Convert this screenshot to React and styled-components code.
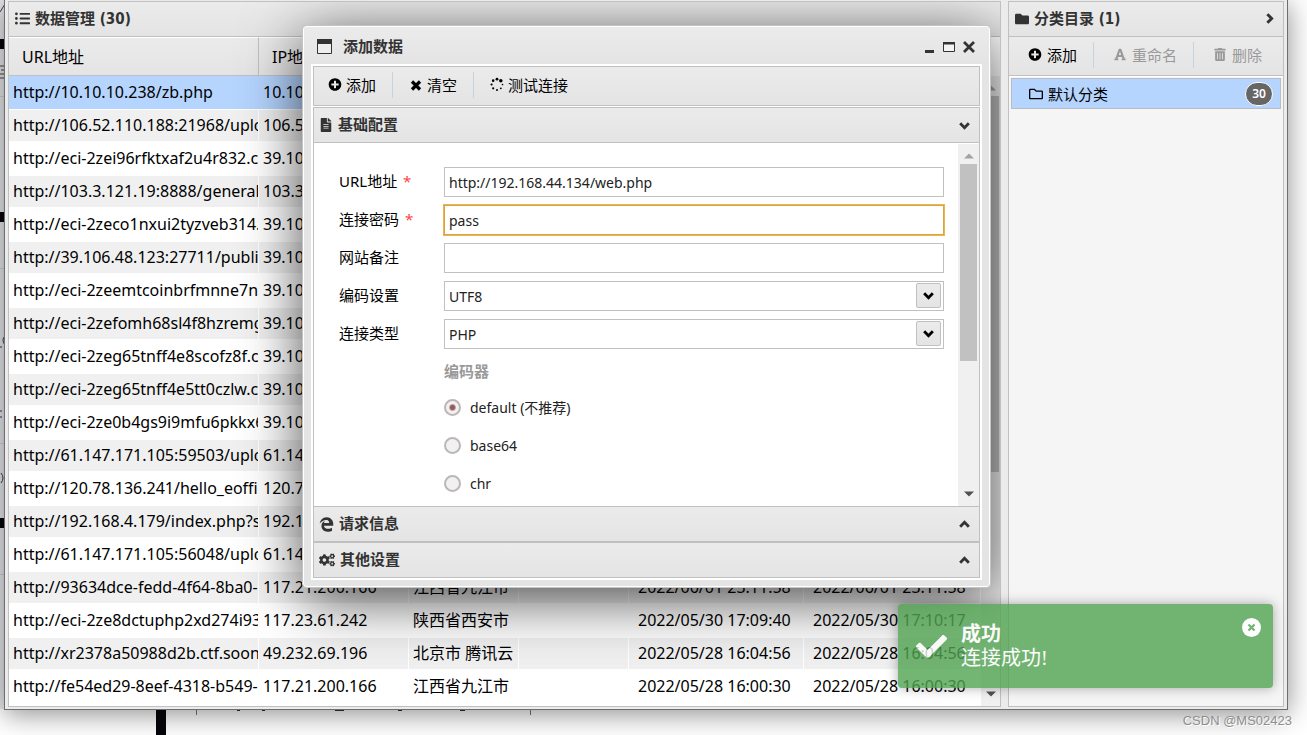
import React, { useState } from 'react';
import styled, { createGlobalStyle, css } from 'styled-components';
import {
  FaCheck,
  FaCogs,
  FaEdgeLegacy,
  FaFileAlt,
  FaFolder,
  FaFont,
  FaListUl,
  FaPlusCircle,
  FaRegFolder,
  FaTrashAlt
} from 'react-icons/fa';

const GlobalStyle = createGlobalStyle`
  * {
    box-sizing: border-box;
  }

  body {
    margin: 0;
    overflow: hidden;
    background: #fff;
    color: #000;
    font-family: 'Noto Sans', 'Noto Sans CJK SC', sans-serif;
    font-size: 15px;
  }

  button, input, select {
    font: inherit;
    color: inherit;
  }
`;

const barFill = css`
  background: linear-gradient(#ebebeb, #e4e4e4);
`;

const Desktop = styled.div`
  position: relative;
  height: 100vh;
  padding: 0 19px 0 4px;
  overflow: hidden;
`;

const Backdrop = styled.svg`
  position: absolute;
  left: 0;
  top: 0;
  width: 100%;
  height: 100%;
`;

const AppWindow = styled.main`
  position: relative;
  display: flex;
  gap: 7px;
  height: calc(100vh - 25px);
  padding: 1px 3px 2px;
  border: 1px solid #6e6e6e;
  border-top: 0;
  background: #ebebeb;
  box-shadow: 0 4px 26px rgba(0, 0, 0, 0.45);
`;

const Panel = styled.section`
  position: relative;
  display: flex;
  flex-direction: column;
  min-width: 0;
  flex: ${({ $width }) => ($width ? `0 0 ${$width}` : '1')};
  border: 1px solid #c0c0c0;
  background: ${({ $bg }) => $bg || '#fff'};
  overflow: hidden;
`;

const PanelHeader = styled.header`
  ${barFill}
  display: flex;
  align-items: center;
  gap: 5px;
  height: 35px;
  flex: none;
  padding: 0 7px 1px 6px;
  border-bottom: 1px solid #c0c0c0;
  color: #333;
`;

const PanelTitle = styled.h2`
  flex: 1;
  margin: 0;
  font-family: 'DejaVu Sans Condensed', 'Noto Sans', 'Noto Sans CJK SC', sans-serif;
  font-size: 15px;
  line-height: 20px;
`;

const PlainButton = styled.button`
  display: flex;
  align-items: center;
  justify-content: center;
  padding: 0;
  border: 0;
  background: none;
`;

const GridArea = styled.div`
  display: flex;
  flex: 1;
  min-height: 0;
`;

const GridClip = styled.div`
  flex: 1;
  min-width: 0;
  overflow: hidden;
`;

const Grid = styled.table`
  width: 100%;
  table-layout: fixed;
  border-collapse: separate;
  border-spacing: 0;
  font-size: 16px;
`;

const HeadCell = styled.th`
  ${barFill}
  height: 39px;
  padding: 0 13px 2px;
  border-top: 1px solid #fff;
  border-right: 1px solid #c0c0c0;
  border-bottom: 1px solid #c0c0c0;
  font-weight: 400;
  text-align: left;
  white-space: nowrap;
`;

const Row = styled.tr`
  background: ${({ $selected, $alt }) => ($selected ? '#b5d4fe' : $alt ? '#f0f0f0' : '#fff')};
`;

const Cell = styled.td`
  padding: 0 0 0 ${({ $wide }) => ($wide ? '9px' : '4px')};
  border: solid ${({ $selected }) => ($selected ? '#b5d4fe' : '#fff')};
  border-width: 1px 1px 1px 0;
  line-height: 31px;
  white-space: nowrap;
  overflow: hidden;
`;

const ScrollTrack = styled.div`
  display: flex;
  flex-direction: column;
  align-items: center;
  justify-content: space-between;
  flex: 0 0 ${({ $wide }) => ($wide ? '21px' : '19px')};
  margin-top: ${({ $offset }) => $offset || 0};
  padding: 9px 0;
  background: #f0f0f0;
`;

const ScrollThumb = styled.div`
  flex: 0 0 ${({ $size }) => $size};
  width: 17px;
  margin: 5px 0 auto;
  background: #c1c1c1;
`;

const Toolbar = styled.div`
  ${barFill}
  display: flex;
  align-items: center;
  height: 39px;
  flex: none;
  padding-bottom: 3px;
  border-bottom: 1px solid #c0c0c0;
`;

const ToolButton = styled.button`
  display: flex;
  align-items: center;
  gap: ${({ $roomy }) => ($roomy ? '5px' : '4px')};
  height: 26px;
  padding: 0 16px 0 ${({ $roomy }) => ($roomy ? '19px' : '16px')};
  border: 0;
  border-right: 1px solid #c3d5da;
  background: none;
  line-height: 20px;
  white-space: nowrap;

  &:last-child {
    border-right: 0;
  }

  &:disabled {
    color: #999;
  }

  svg {
    flex: 0 0 14px;
  }
`;

const CategoryList = styled.ul`
  margin: 0;
  padding: 1px 2px;
  border-top: 1px solid #fff;
  list-style: none;
`;

const Category = styled.li`
  display: flex;
  align-items: center;
  gap: 5px;
  height: 31px;
  padding: 0 7px 0 17px;
  border: 1px solid #b9bcc4;
  background: #b5d4fe;
`;

const CategoryName = styled.span`
  flex: 1;
  line-height: 20px;
`;

const Badge = styled.span`
  display: flex;
  align-items: center;
  justify-content: center;
  width: 28px;
  height: 24px;
  border: 1px solid #fff;
  border-radius: 12px;
  background: #666;
  color: #fff;
  font-size: 12px;
  font-weight: 600;
`;

const DialogLayer = styled.div`
  position: absolute;
  inset: 24px 10px auto 0;
  display: flex;
  justify-content: flex-end;
`;

const Dialog = styled.div`
  width: 687px;
  max-width: 100%;
  padding: 0 7px 6px;
  border: 1px solid #fff;
  border-radius: 3px;
  outline: 1px solid #c4c4c4;
  background: linear-gradient(#ebebeb, #e4e4e4 38px);
  box-shadow: 0 12px 60px rgba(0, 0, 0, 0.7);
`;

const DialogHeader = styled.header`
  display: flex;
  align-items: center;
  gap: 11px;
  height: 37px;
  padding: 2px 3px 0 6px;
  color: #333;
`;

const WindowButtons = styled.div`
  display: flex;

  button {
    width: 20px;
    height: 20px;
  }
`;

const DialogBody = styled.div`
  padding: 2px;
  background: #fff;
`;

const DialogToolbar = styled(Toolbar)`
  height: 40px;
  margin-bottom: 1px;
  border: 1px solid #c0c0c0;

  button:first-child {
    padding-left: 14px;
  }
`;

const SectionHeader = styled.h3`
  ${barFill}
  height: 36px;
  margin: 0;
  border: 1px solid #c0c0c0;
  font-size: 15px;
`;

const SectionToggle = styled.button`
  display: flex;
  align-items: center;
  gap: 5px;
  width: 100%;
  height: 34px;
  padding: 0 8px 0 5px;
  border: 0;
  background: none;
  color: #333;
  line-height: 20px;
  text-align: left;
`;

const SectionTitle = styled.span`
  flex: 1;
  padding-bottom: 2px;
`;

const SectionBody = styled.div`
  display: flex;
  height: 363px;
  padding-top: 1px;
  border: solid #c0c0c0;
  border-width: 0 1px;
  overflow: hidden;
`;

const Form = styled.form`
  display: flex;
  flex: 1;
  flex-direction: column;
  gap: 8px;
  min-width: 0;
  padding: 23px 14px 0 25px;
`;

const Field = styled.div`
  display: flex;
  align-items: center;
  flex: 0 0 30px;
`;

const FieldLabel = styled.label`
  flex: 0 0 105px;
  padding-bottom: 2px;
  line-height: 20px;
`;

const Required = styled.span`
  margin-left: 2px;
  color: #f44;
`;

const TextBox = styled.input`
  flex: 1;
  min-width: 0;
  height: 30px;
  padding: 0 4px;
  border: 1px solid ${({ $active }) => ($active ? '#d9a244' : '#c0c0c0')};
  border-radius: 0;
  outline: ${({ $active }) => ($active ? '1px solid #f0b54a' : 'none')};
  background: #fff;
  color: #222;
  font-size: 14px;
`;

const Combo = styled.div`
  position: relative;
  display: flex;
  flex: 1;
`;

const ComboSelect = styled.select`
  flex: 1;
  height: 30px;
  padding: 0 4px;
  border: 1px solid #c0c0c0;
  border-radius: 0;
  background: #fff;
  color: #222;
  font-size: 14px;
  appearance: none;
`;

const ComboArrow = styled.span`
  ${barFill}
  position: absolute;
  top: 2px;
  right: 3px;
  display: flex;
  align-items: center;
  justify-content: center;
  width: 25px;
  height: 25px;
  border: 1px solid #c0c0c0;
  border-radius: 2px;
  pointer-events: none;
`;

const Options = styled.fieldset`
  display: flex;
  flex-direction: column;
  gap: 8px;
  margin: 0 0 0 105px;
  padding: 0;
  border: 0;
`;

const OptionsTitle = styled.legend`
  height: 28px;
  margin-bottom: 7px;
  padding: 0;
  color: #999;
  font-weight: 700;
  line-height: 28px;
`;

const Option = styled.label`
  display: flex;
  align-items: center;
  gap: 9px;
  height: 30px;
  color: #222;
  font-size: 14px;
`;

const Radio = styled.input`
  width: 17px;
  height: 17px;
  margin: 0;
  border: 2px solid #bdb6b6;
  border-radius: 50%;
  background: #f1f1f1;
  appearance: none;

  &:checked {
    background: radial-gradient(circle, #96595a 2px, #f1f1f1 4px);
  }
`;

const Toast = styled.div`
  position: absolute;
  right: 34px;
  bottom: 47px;
  display: flex;
  align-items: flex-start;
  width: 375px;
  height: 84px;
  padding: 14px 12px 0 18px;
  border-radius: 4px;
  background: #51a351;
  color: #fff;
  box-shadow: 0 0 12px rgba(0, 0, 0, 0.4);
  opacity: 0.8;
`;

const ToastIcon = styled.span`
  padding-top: 13px;
`;

const ToastText = styled.div`
  flex: 1;
  margin-left: 14px;
  padding-top: 4px;
  font-family: 'Liberation Serif', 'Noto Sans CJK SC', serif;
  font-size: 20px;
  line-height: 24px;
`;

const ToastTitle = styled.strong`
  display: block;
`;

const Watermark = styled.span`
  position: absolute;
  right: 15px;
  bottom: 6px;
  color: #8d8d8d;
  font-family: 'Liberation Sans', sans-serif;
  font-size: 13px;
  line-height: 16px;
  text-shadow: 1px 1px 0 #fff;
`;

const columns = [
  { title: 'URL地址', key: 'url', width: 250 },
  { title: 'IP地址', key: 'ip', width: 150 },
  { title: '物理位置', key: 'place', width: 110 },
  { title: '网站备注', key: 'note', width: 110 },
  { title: '创建时间', key: 'created', width: 175, wide: true },
  { title: '更新时间', key: 'updated', wide: true }
];

const rows = [
  { url: 'http://10.10.10.238/zb.php', ip: '10.10.10.238' },
  { url: 'http://106.52.110.188:21968/uplo', ip: '106.52.110.188' },
  { url: 'http://eci-2zei96rfktxaf2u4r832.clo', ip: '39.106.48.123' },
  { url: 'http://103.3.121.19:8888/general/', ip: '103.3.121.19' },
  { url: 'http://eci-2zeco1nxui2tyzveb314.c', ip: '39.106.48.123' },
  { url: 'http://39.106.48.123:27711/public', ip: '39.106.48.123' },
  { url: 'http://eci-2zeemtcoinbrfmnne7nq.', ip: '39.106.48.123' },
  { url: 'http://eci-2zefomh68sl4f8hzremg.', ip: '39.106.48.123' },
  { url: 'http://eci-2zeg65tnff4e8scofz8f.clo', ip: '39.106.48.123' },
  { url: 'http://eci-2zeg65tnff4e5tt0czlw.clo', ip: '39.106.48.123' },
  { url: 'http://eci-2ze0b4gs9i9mfu6pkkx6.', ip: '39.106.48.123' },
  { url: 'http://61.147.171.105:59503/uplo', ip: '61.147.171.105' },
  { url: 'http://120.78.136.241/hello_eoffic', ip: '120.78.136.241' },
  { url: 'http://192.168.4.179/index.php?s=', ip: '192.168.4.179' },
  { url: 'http://61.147.171.105:56048/uplo', ip: '61.147.171.105' },
  {
    url: 'http://93634dce-fedd-4f64-8ba0-2',
    ip: '117.21.200.166',
    place: '江西省九江市',
    created: '2022/06/01 23:11:58',
    updated: '2022/06/01 23:11:58'
  },
  {
    url: 'http://eci-2ze8dctuphp2xd274i93.c',
    ip: '117.23.61.242',
    place: '陕西省西安市',
    created: '2022/05/30 17:09:40',
    updated: '2022/05/30 17:10:17'
  },
  {
    url: 'http://xr2378a50988d2b.ctf.soons',
    ip: '49.232.69.196',
    place: '北京市 腾讯云',
    created: '2022/05/28 16:04:56',
    updated: '2022/05/28 16:04:56'
  },
  {
    url: 'http://fe54ed29-8eef-4318-b549-6',
    ip: '117.21.200.166',
    place: '江西省九江市',
    created: '2022/05/28 16:00:30',
    updated: '2022/05/28 16:00:30'
  },
  { url: '' }
];

const encoders = [
  { value: 'default', label: 'default (不推荐)' },
  { value: 'base64', label: 'base64' },
  { value: 'chr', label: 'chr' }
];

const chevrons = {
  down: 'M2 4l4 4 4-4',
  up: 'M2 8l4-4 4 4',
  right: 'M4 2l4 4-4 4'
};

const Chevron = ({ to }) => (
  <svg width="13" height="13" viewBox="0 0 12 12" aria-hidden="true">
    <path d={chevrons[to]} fill="none" stroke="currentColor" strokeWidth="2.6" />
  </svg>
);

const ScrollArrow = ({ up, muted }) => (
  <svg width="10" height="6" viewBox="0 0 10 6" aria-hidden="true">
    <path d={up ? 'M0 5.5L5 .5l5 5z' : 'M0 .5l5 5 5-5z'} fill={muted ? '#a3a3a3' : '#505050'} />
  </svg>
);

const CrossIcon = () => (
  <svg width="14" height="14" viewBox="0 0 14 14" aria-hidden="true">
    <path d="M3 3.5l8 8m0-8l-8 8" stroke="currentColor" strokeWidth="3.2" />
  </svg>
);

// dots clockwise from the top: x, y, radius
const dots = [
  [7.5, 1.8, 1.5],
  [11.6, 3.4, 1.9],
  [13.4, 7.5, 0.9],
  [11.6, 11.6, 1],
  [7.5, 13.4, 1.1],
  [3.4, 11.6, 1.2],
  [1.7, 7.5, 1.2],
  [3.4, 3.4, 1.4]
];

const SpinnerIcon = () => (
  <svg width="15" height="15" viewBox="0 0 15 15" aria-hidden="true">
    {dots.map(([x, y, r]) => (
      <circle key={`${x}-${y}`} cx={x} cy={y} r={r} />
    ))}
  </svg>
);

const FrameIcon = () => (
  <svg width="15" height="15" viewBox="0 0 15 15" aria-hidden="true">
    <path d="M.5.5h14v14H.5z" fill="#eee" stroke="#333" />
    <path d="M0 0h15v5H0z" fill="#333" />
  </svg>
);

const DesktopBackdrop = () => (
  <Backdrop aria-hidden="true">
    <rect width="5" height="709" fill="#e8e9ec" />
    <path d="M0 39h5v10H0zM0 212h5v10H0zM0 518h5v10H0zM156 705h10v30h-10z" fill="#05050b" />
    <path d="M0 96.5h5M0 268.5h5M0 443.5h5M0 574.5h5" stroke="#d0d2d6" />
    <path d="M5 4L0 12M0 66h5M1 70h4M0 74h5M0 78h5" stroke="#45414a" fill="none" />
    <path d="M5 336q-4 4 0 9M0 347h2M0 411h2M0 417h2M1 473q4 5 0 10" stroke="#3a3850" fill="none" />
    <path d="M196.5 705v10M530.5 705v10" stroke="#777" />
    <path d="M237 709h3v2h-3zM262 709h3v2h-3zM335 709h9v2h-9zM398 709h4v2h-4zM460 709h5v2h-5z" fill="#333" />
  </Backdrop>
);

const DataGrid = () => (
  <GridArea>
    <GridClip>
      <Grid>
        <colgroup>
          {columns.map((column) => (
            <col key={column.key} width={column.width} />
          ))}
        </colgroup>
        <thead>
          <tr>
            {columns.map((column) => (
              <HeadCell key={column.key}>{column.title}</HeadCell>
            ))}
          </tr>
        </thead>
        <tbody>
          {rows.map((row, index) => (
            <Row key={index} $selected={index === 0} $alt={index % 2 === 1}>
              {columns.map((column) => (
                <Cell key={column.key} $selected={index === 0} $wide={column.wide}>
                  {row[column.key]}
                </Cell>
              ))}
            </Row>
          ))}
        </tbody>
      </Grid>
    </GridClip>
    <ScrollTrack $offset="39px">
      <ScrollArrow up muted />
      <ScrollThumb $size="376px" />
      <ScrollArrow />
    </ScrollTrack>
  </GridArea>
);

const Sidebar = () => (
  <Panel as="aside" $width="276px" $bg="#f5f5f5">
    <PanelHeader>
      <FaFolder size={14} />
      <PanelTitle>分类目录 (1)</PanelTitle>
      <PlainButton type="button" aria-label="折叠">
        <Chevron to="right" />
      </PlainButton>
    </PanelHeader>
    <Toolbar>
      <ToolButton type="button" $roomy>
        <FaPlusCircle size={13} />
        添加
      </ToolButton>
      <ToolButton type="button" $roomy disabled>
        <FaFont size={13} />
        重命名
      </ToolButton>
      <ToolButton type="button" $roomy disabled>
        <FaTrashAlt size={13} />
        删除
      </ToolButton>
    </Toolbar>
    <CategoryList>
      <Category>
        <FaRegFolder size={14} />
        <CategoryName>默认分类</CategoryName>
        <Badge>30</Badge>
      </Category>
    </CategoryList>
  </Panel>
);

const Section = ({ icon, title, open }) => (
  <SectionHeader>
    <SectionToggle type="button" aria-expanded={!!open}>
      {icon}
      <SectionTitle>{title}</SectionTitle>
      <Chevron to={open ? 'down' : 'up'} />
    </SectionToggle>
  </SectionHeader>
);

const ShellForm = () => {
  const [encoder, setEncoder] = useState('default');

  return (
    <Form>
      <Field>
        <FieldLabel htmlFor="url">
          URL地址 <Required>*</Required>
        </FieldLabel>
        <TextBox id="url" defaultValue="http://192.168.44.134/web.php" />
      </Field>
      <Field>
        <FieldLabel htmlFor="pwd">
          连接密码 <Required>*</Required>
        </FieldLabel>
        <TextBox id="pwd" defaultValue="pass" $active />
      </Field>
      <Field>
        <FieldLabel htmlFor="note">网站备注</FieldLabel>
        <TextBox id="note" />
      </Field>
      <Field>
        <FieldLabel htmlFor="encode">编码设置</FieldLabel>
        <Combo>
          <ComboSelect id="encode" defaultValue="UTF8">
            <option>UTF8</option>
            <option>GBK</option>
          </ComboSelect>
          <ComboArrow>
            <Chevron to="down" />
          </ComboArrow>
        </Combo>
      </Field>
      <Field>
        <FieldLabel htmlFor="type">连接类型</FieldLabel>
        <Combo>
          <ComboSelect id="type" defaultValue="PHP">
            <option>PHP</option>
            <option>ASP</option>
          </ComboSelect>
          <ComboArrow>
            <Chevron to="down" />
          </ComboArrow>
        </Combo>
      </Field>
      <Options>
        <OptionsTitle>编码器</OptionsTitle>
        {encoders.map(({ value, label }) => (
          <Option key={value}>
            <Radio
              type="radio"
              name="encoder"
              value={value}
              checked={encoder === value}
              onChange={() => setEncoder(value)}
            />
            {label}
          </Option>
        ))}
      </Options>
    </Form>
  );
};

const AddDialog = () => (
  <DialogLayer>
    <Dialog role="dialog" aria-labelledby="dialog-title">
      <DialogHeader>
        <FrameIcon />
        <PanelTitle id="dialog-title">添加数据</PanelTitle>
        <WindowButtons>
          <PlainButton type="button" aria-label="最小化">
            <svg width="12" height="12" viewBox="0 0 12 12">
              <path d="M2 9h9v3H2z" fill="#333" />
            </svg>
          </PlainButton>
          <PlainButton type="button" aria-label="最大化">
            <svg width="12" height="12" viewBox="0 0 12 12">
              <path d="M.5 2.5h11v8H.5z" fill="#f4f4f4" stroke="#333" />
              <path d="M0 1h12v2.5H0z" fill="#333" />
            </svg>
          </PlainButton>
          <PlainButton type="button" aria-label="关闭">
            <svg width="12" height="12" viewBox="0 0 12 12">
              <path d="M1 1l10 10M11 1L1 11" stroke="#333" strokeWidth="2.8" />
            </svg>
          </PlainButton>
        </WindowButtons>
      </DialogHeader>
      <DialogBody>
        <DialogToolbar>
          <ToolButton type="button">
            <FaPlusCircle size={13} />
            添加
          </ToolButton>
          <ToolButton type="button">
            <CrossIcon />
            清空
          </ToolButton>
          <ToolButton type="button">
            <SpinnerIcon />
            测试连接
          </ToolButton>
        </DialogToolbar>
        <Section icon={<FaFileAlt size={14} />} title="基础配置" open />
        <SectionBody>
          <ShellForm />
          <ScrollTrack $wide>
            <ScrollArrow up muted />
            <ScrollThumb $size="197px" />
            <ScrollArrow />
          </ScrollTrack>
        </SectionBody>
        <Section icon={<FaEdgeLegacy size={15} />} title="请求信息" />
        <Section icon={<FaCogs size={16} />} title="其他设置" />
      </DialogBody>
    </Dialog>
  </DialogLayer>
);

const App = () => (
  <>
    <GlobalStyle />
    <Desktop>
      <DesktopBackdrop />
      <AppWindow>
        <Panel>
          <PanelHeader>
            <FaListUl size={15} />
            <PanelTitle>数据管理 (30)</PanelTitle>
          </PanelHeader>
          <DataGrid />
          <AddDialog />
        </Panel>
        <Sidebar />
      </AppWindow>
      <Toast role="status">
        <ToastIcon>
          <FaCheck size={31} />
        </ToastIcon>
        <ToastText>
          <ToastTitle>成功</ToastTitle>
          连接成功!
        </ToastText>
        <PlainButton type="button" aria-label="关闭通知">
          <svg width="19" height="19" viewBox="0 0 19 19">
            <circle cx="9.5" cy="9.5" r="9.5" fill="#fff" />
            <path d="M6.5 6.5l6 6m0-6l-6 6" stroke="#51a351" strokeWidth="2.2" />
          </svg>
        </PlainButton>
      </Toast>
      <Watermark>CSDN @MS02423</Watermark>
    </Desktop>
  </>
);

export default App;
